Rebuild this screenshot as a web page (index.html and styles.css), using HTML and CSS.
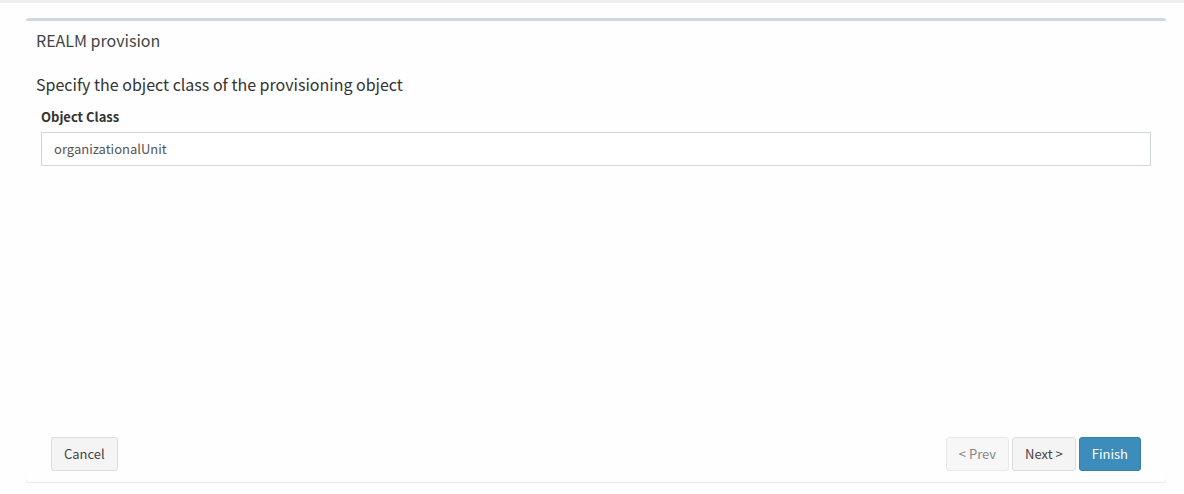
FILE: index.html
```html
<!DOCTYPE html>
<html lang="en">
<head>
<meta charset="utf-8">
<title>REALM provision</title>
<link rel="stylesheet" href="styles.css">
</head>
<body>
<main class="page">
<form class="box">
<header class="box-header"><h1 class="box-title">REALM provision</h1></header>
<section class="box-body">
<h2 class="step-title">Specify the object class of the provisioning object</h2>
<div class="form-group">
<label class="label" for="object-class">Object Class</label>
<input class="control" id="object-class" type="text" value="organizationalUnit">
</div>
</section>
<footer class="box-footer">
<button class="btn" type="button">Cancel</button>
<div class="steps">
<button class="btn" type="button" disabled>&lt; Prev</button>
<button class="btn" type="button">Next &gt;</button>
<button class="btn btn-primary" type="submit">Finish</button>
</div>
</footer>
</form>
</main>
</body>
</html>
```
FILE: styles.css
```css
* { box-sizing: border-box; }
body {
  margin: 0;
  background: #fefefe;
  color: #333;
  font-family: "Source Sans Pro", "Noto Sans CJK SC", "Noto Sans", sans-serif;
  font-size: 13px;
  line-height: 20px;
}
.page {
  display: flex;
  min-height: 100vh;
  border-top: 3px solid #eee;
  padding: 15px 18px 12px 26px;
}
.box {
  flex: 1;
  display: flex;
  flex-direction: column;
  border-top: 3px solid #d2d6de;
  border-radius: 3px;
  background: #fefefe;
  box-shadow: 0 1px 1px rgba(0, 0, 0, 0.08), 0 0 1px rgba(0, 0, 0, 0.06);
}
.box-header { padding: 9px 10px 10px; }
.box-title, .step-title {
  margin: 0;
  font-size: 16px;
  font-weight: 400;
  line-height: 20px;
}
.box-title { color: #444; }
.box-body { flex: 1; padding: 14px 10px; }
.form-group { padding: 13px 5px; }
.label { display: block; margin-bottom: 5px; font-weight: 700; }
.control {
  display: block;
  width: 100%;
  height: 34px;
  padding: 5px 12px 7px;
  border: 1px solid #d2d6de;
  border-radius: 0;
  background: #fff;
  color: #555;
  font: inherit;
}
.box-footer {
  display: flex;
  justify-content: space-between;
  padding: 10px 25px 11px;
}
.steps { display: flex; gap: 3px; }
.btn {
  height: 34px;
  padding: 6px 12px;
  border: 1px solid #ddd;
  border-radius: 3px;
  background: #f4f4f4;
  color: #444;
  font: inherit;
}
.btn:disabled { opacity: 0.65; }
.btn-primary { border-color: #367fa9; background: #3c8dbc; color: #fff; }
```
